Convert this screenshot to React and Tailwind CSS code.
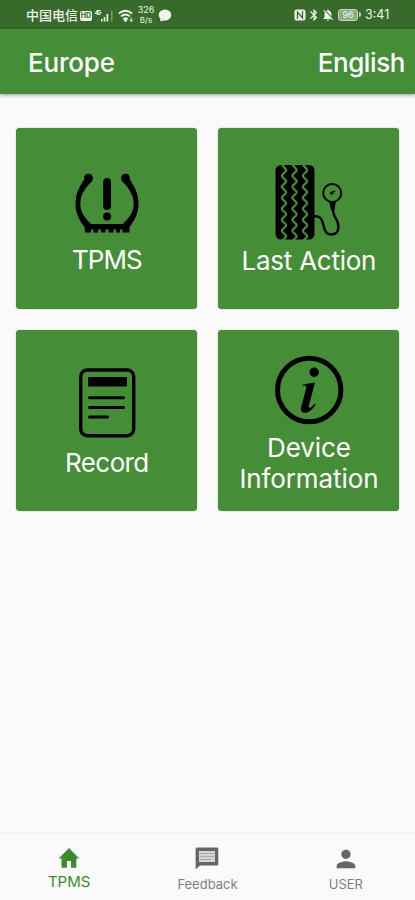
import { useState } from "react";
import { MdBluetooth, MdNotificationsOff, MdPerson } from "react-icons/md";

const tiles = [
  { id: "tpms", lines: ["TPMS"], icon: TpmsIcon, text: "mt-[10px] tracking-[-0.9px]" },
  { id: "last", lines: ["Last Action"], icon: TireIcon, text: "mt-[5px] tracking-[-0.25px]" },
  { id: "record", lines: ["Record"], icon: RecordIcon, text: "mt-[9px] tracking-[-0.6px]" },
  { id: "device", lines: ["Device", "Information"], icon: InfoIcon, text: "mt-[7px] tracking-[-0.1px]" },
];

function TpmsIcon() {
  return (
    <svg width="64" height="62" viewBox="75 172 64 62" className="mt-[44px]">
      <circle cx="88.500" cy="178.300" r="4.500" />
      <circle cx="125.500" cy="178.300" r="4.500" />
      <path d="M84.500 179C79 187 75.500 194 75.500 204C75.500 214 80 221 84.500 227L91 224C86 219 80.300 213 80.300 204C80.300 195 85 188 92 181ZM129.500 179C135 187 138.500 194 138.500 204C138.500 214 134 221 129.500 227L123 224C128 219 133.700 213 133.700 204C133.700 195 129 188 122 181Z" />
      <path d="M84.500 221L89 224H125L129.500 221V232.500H122.500V229.500H120V232.500H116V229.500H113.500V232.500H108.500V229.500H105.500V232.500H100.800V229.500H98V232.500H93.500V229.500H91V232.500H85Z" />
      <path d="M107.100 182V206" stroke="#000" strokeWidth="7.800" strokeLinecap="round" />
      <circle cx="107.100" cy="216.500" r="4" />
    </svg>
  );
}

function TireIcon() {
  const groove = "l4.500 5.500v1.500l-4 4v1.500l4 4v1.500l-4 4v1.500l4 4v1.500l-4 4v1.500l4 4v1.500l-4 4v1.500l4 4v1.500l-4 4v1.500l4 4v1.500l-4 4v1.500l4 4v1.500l-4 4";
  return (
    <svg width="70" height="76" viewBox="275 164 70 76" className="mt-[36px]">
      <rect x="276.500" y="165" width="39" height="74.500" rx="5.500" />
      <g fill="none" stroke="#468d37" strokeWidth="2.200" strokeLinejoin="round">
        <path d={`M282.500 164${groove}`} />
        <path d={`M293 164${groove}`} />
        <path d={`M303.500 164${groove}`} />
      </g>
      <g fill="none" stroke="#000">
        <circle cx="333.200" cy="193" r="9" strokeWidth="2" />
        <path
          d="M315 216.500C328 214 321 234.500 332 234.500C341 234.500 341 225 336 217C334 213.500 333.500 209 333.500 202"
          strokeWidth="2.400"
        />
        <path d="M331 193.500L336 191" strokeWidth="1.500" />
      </g>
      <circle cx="333" cy="193" r="1.500" />
      <path d="M330.200 202H336.800L335.200 211H332.400Z" />
    </svg>
  );
}

function RecordIcon() {
  return (
    <svg width="58" height="70" viewBox="78 369 58 70" className="mt-[38px]">
      <rect x="80.700" y="371" width="53" height="65.700" rx="6.500" fill="none" stroke="#000" strokeWidth="3.400" />
      <rect x="88" y="378" width="39" height="9.500" />
      <path
        d="M89.500 398.700H123.500M89.500 408.400H123.500M89.500 418H107.500"
        stroke="#000"
        strokeWidth="3"
        strokeLinecap="round"
      />
    </svg>
  );
}

function InfoIcon() {
  return (
    <svg width="70" height="70" viewBox="273.500 355 70 70" className="mt-[25px]">
      <circle cx="308.700" cy="390" r="31.700" fill="none" stroke="#000" strokeWidth="5" />
      <circle cx="313.700" cy="372.200" r="4.700" />
      <path d="M302.500 384.500L314.500 382.500L308.500 405C307.800 407.800 309 408.600 311 407L314.500 403.500L315.200 404.500C312 409.500 308.500 412.800 304.500 412.800C300.500 412.800 299.800 410 300.800 406.500L305.500 389C306.300 386.300 305.500 385.600 302.200 385.600Z" />
    </svg>
  );
}

function StatusBar() {
  return (
    <div className="h-[29px] shrink-0 bg-[#386b2b] flex items-center pl-[26px] pr-[25px] pt-[2px] text-[#edf4ea]">
      <span className="text-[13px] leading-none font-medium font-['Noto_Sans_CJK_SC',sans-serif] -mt-[2px]">
        中国电信
      </span>
      <span className="ml-[2px] w-[12px] h-[10px] rounded-[2px] bg-[#edf4ea] text-[#386b2b] text-[7px] leading-[10px] font-bold text-center">
        HD
      </span>
      <svg width="20" height="14" viewBox="95 8 20 14" className="ml-[2px]" fill="#edf4ea">
        <text x="95.500" y="14" fontSize="6.500" fontWeight="700" textLength="7">4G</text>
        <path d="M102 18h1.500v2.500H102zM104.700 16h1.600v4.500h-1.600zM107.500 13h1.700v7.500h-1.700z" />
        <path d="M112 10h1.500v10.500H112z" opacity="0.35" />
      </svg>
      <svg width="16" height="14" viewBox="118 8 16 14" className="ml-[4px]" fill="none" stroke="#edf4ea" strokeWidth="1.700">
        <path d="M118.800 12.500Q125.500 7 132.200 12.500M121 15.300Q125.500 11.700 130 15.300M123.200 18Q125.500 16.200 127.800 18" />
        <circle cx="125.500" cy="19.200" r="0.800" />
        <path d="M131.200 16.500v4M129.500 18.700l1.700 1.800l1.700-1.800" strokeWidth="1" />
      </svg>
      <span className="ml-[4px] w-[16px] flex flex-col items-center text-[9px] leading-[10px] -mt-[1px]">
        <span>326</span>
        <span className="text-[8px]">B/s</span>
      </span>
      <svg width="14" height="13" viewBox="0 0 14 13" className="ml-[4px]" fill="#edf4ea">
        <ellipse cx="7" cy="6" rx="6.300" ry="5.500" />
        <path d="M2.500 8L2.300 12.500L7 11Z" />
      </svg>

      <div className="ml-auto flex items-center -mt-[2px]">
        <svg width="12" height="12" viewBox="0 0 12 12">
          <rect x="0.500" y="0.500" width="11" height="11" rx="2" fill="#edf4ea" />
          <path d="M3.500 10V3L8.500 9V2" fill="none" stroke="#386b2b" strokeWidth="1.300" />
        </svg>
        <MdBluetooth className="w-[14px] h-[14px] ml-[1px]" />
        <MdNotificationsOff className="w-[14px] h-[14px]" />
        <span className="ml-[3px] w-[20px] h-[12px] rounded-[3px] border border-[#c5d5c0] bg-[#8dab85] text-[9px] leading-[10px] text-center">
          96
        </span>
        <span className="w-[2px] h-[5px] ml-[1px] rounded-r-sm bg-[#c5d5c0]" />
        <span className="ml-[4px] w-[25px] mt-[2px] text-[12.5px] leading-none">3:41</span>
      </div>
    </div>
  );
}

function HomeIcon() {
  return (
    <svg width="22" height="20" viewBox="0 0 22 20" fill="currentColor">
      <path d="M11 0L21.300 10.500H18.300V19.700H13V13H9V19.700H3.500V10.500H0.700Z" />
    </svg>
  );
}

function FeedbackIcon() {
  return (
    <svg width="24" height="23" viewBox="0 0 24 23">
      <path d="M2 .5H22Q23.300.5 23.300 2V17Q23.300 18.500 22 18.500H5L.6 22.500V2Q.6.5 2 .5Z" fill="#666" />
      <path d="M4 4H20V15H4Z" fill="#d5d5d5" />
      <path d="M5 6.500H19M5 9.500H19M5 12.500H16" stroke="#aaa" strokeWidth="1" />
    </svg>
  );
}

const App = () => {
  const [tab, setTab] = useState("TPMS");

  const tabColor = (name) => (tab === name ? "text-[#3c8c2e]" : "text-[#808080]");

  return (
    <div className="w-full h-[900px] flex flex-col overflow-hidden bg-[#fafafa] font-['Inter',sans-serif]">
      <StatusBar />

      <header className="h-[65px] shrink-0 bg-[#468d37] flex items-center justify-between pl-[28px] pr-[10px] text-white text-[26px] font-medium shadow-[0_1px_4px_rgba(0,0,0,0.4)]">
        <span className="tracking-[-0.2px] mt-[1px]">Europe</span>
        <span className="tracking-[-0.4px] mt-[1px]">English</span>
      </header>

      {/* TILES */}
      <main className="flex-1 grid grid-cols-[181px_181px] auto-rows-[181px] gap-[21px] pl-[16.4px] pt-[34.4px]">
        {tiles.map((tile) => (
          <button
            type="button"
            key={tile.id}
            className="flex flex-col items-center rounded-[4px] bg-[#468d37] shadow-[0_0_1px_#287c18]"
          >
            <tile.icon />
            <span className={`flex flex-col text-white text-[26px] leading-[31px] whitespace-nowrap ${tile.text}`}>
              {tile.lines.map((line) => (
                <span key={line}>{line}</span>
              ))}
            </span>
          </button>
        ))}
      </main>

      {/* BOTTOM NAV */}
      <nav className="h-[67px] shrink-0 grid grid-cols-3 border-t border-[#f0f0f0] shadow-[0_-1px_2px_rgba(0,0,0,0.03)]">
        <button type="button" onClick={() => setTab("TPMS")} className={`flex flex-col items-center pt-[14px] ${tabColor("TPMS")}`}>
          <HomeIcon />
          <span className="mt-[4px] text-[15px] leading-[20px]">TPMS</span>
        </button>
        <button type="button" onClick={() => setTab("Feedback")} className={`flex flex-col items-center pt-[13px] ${tabColor("Feedback")}`}>
          <FeedbackIcon />
          <span className="mt-[4px] text-[13px] leading-[20px]">Feedback</span>
        </button>
        <button type="button" onClick={() => setTab("USER")} className={`flex flex-col items-center pt-[11px] ${tabColor("USER")}`}>
          <MdPerson className="w-[28px] h-[28px] text-[#666]" />
          <span className="mt-[1px] text-[13px] leading-[20px]">USER</span>
        </button>
      </nav>
    </div>
  );
};

export default App;
